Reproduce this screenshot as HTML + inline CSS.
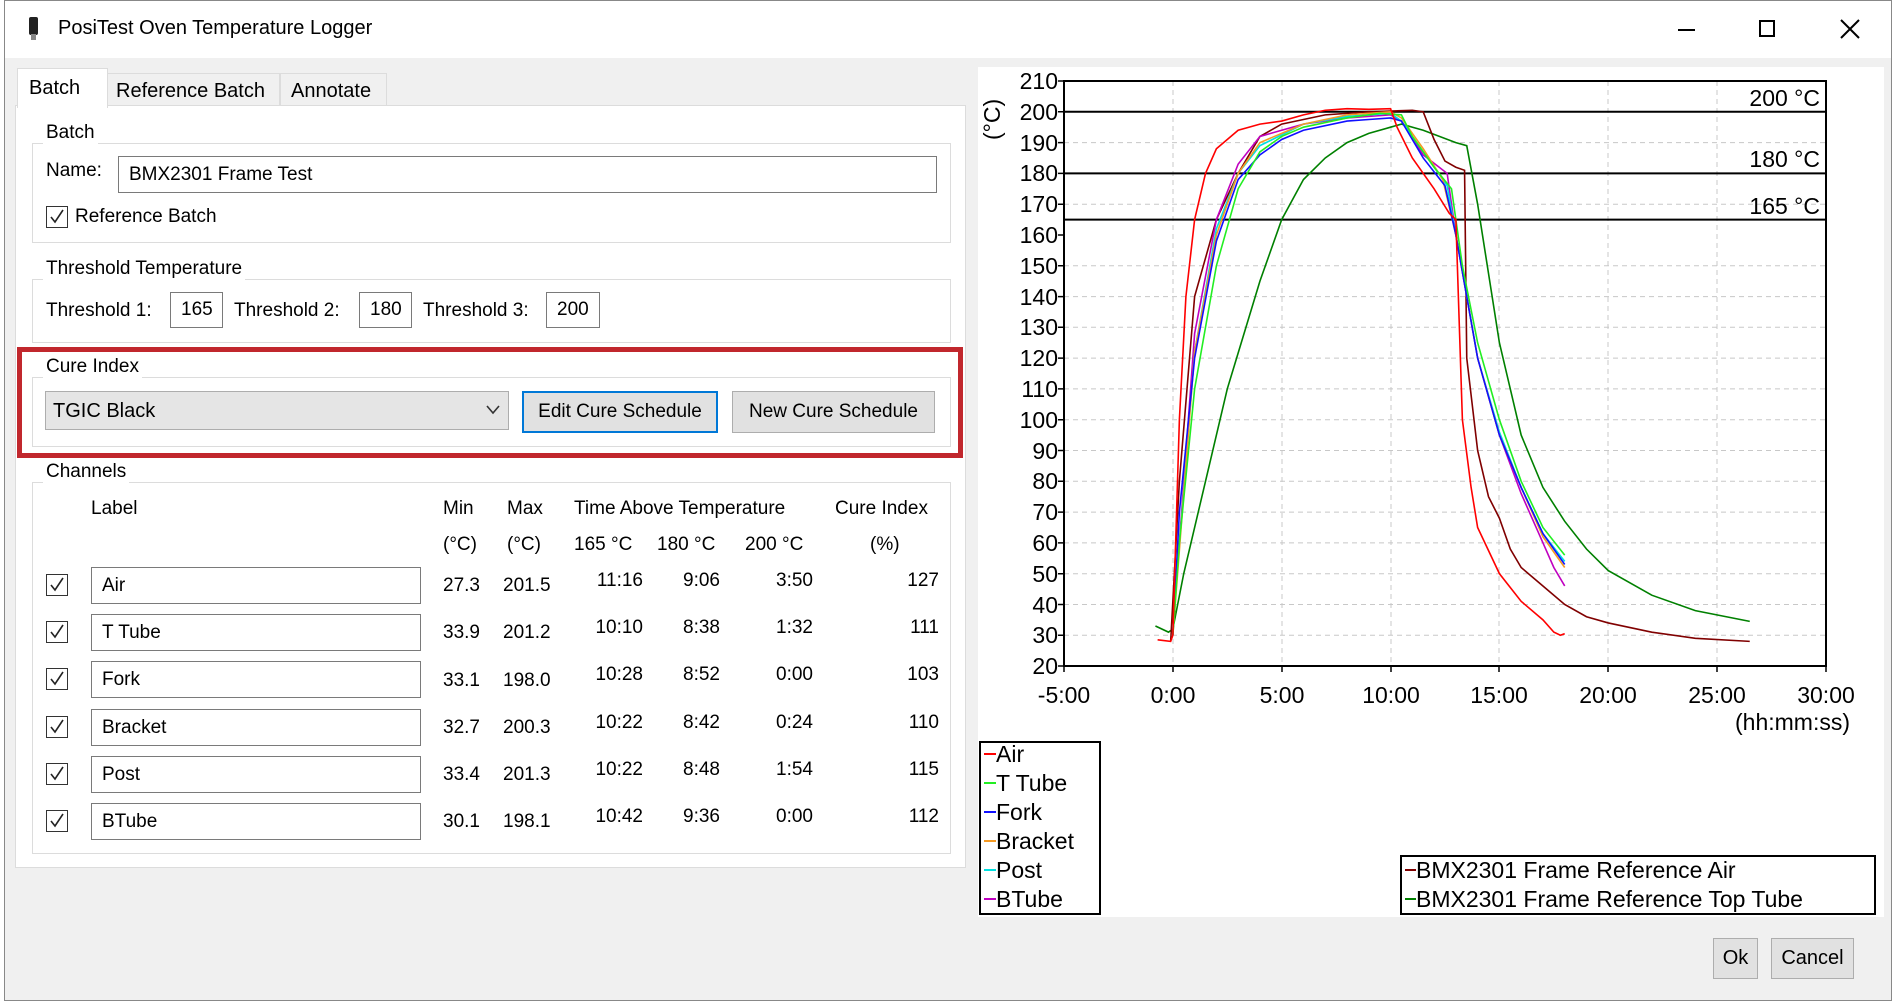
<!DOCTYPE html>
<html><head><meta charset="utf-8"><style>
*{margin:0;padding:0;box-sizing:border-box}
body{width:1900px;height:1004px;background:#fff;font-family:"Liberation Sans",sans-serif;color:#000;position:relative;overflow:hidden}
.a{position:absolute;white-space:nowrap}
.t{font-size:19px}
.gb{position:absolute;border:1px solid #dcdcdc}
.gl{position:absolute;background:#fff;padding:0 3px;font-size:19px}
.inp{position:absolute;background:#fff;border:1px solid #7a7a7a;font-size:19px;padding-left:10px;display:flex;align-items:center}
.cb{position:absolute;width:22px;height:22px;border:1.5px solid #333;background:#fff}
.cb svg{position:absolute;left:2px;top:2px}
.btn{position:absolute;background:#e1e1e1;border:1px solid #adadad;font-size:19px;display:flex;align-items:center;justify-content:center}
.num{position:absolute;font-size:19px;text-align:right}
</style></head><body>
<!-- window frame -->
<div class="a" style="left:4px;top:0;width:1888px;height:1001px;border:1px solid #888;"></div>
<div class="a" style="left:5px;top:58px;width:1886px;height:942px;background:#f0f0f0"></div>
<!-- title -->
<div class="a" style="left:29px;top:17px;width:9px;height:18px;background:#222;border-radius:2px"></div>
<div class="a" style="left:31px;top:34px;width:5px;height:6px;background:#888"></div>
<div class="a" style="left:58px;top:17px;font-size:20px">PosiTest Oven Temperature Logger</div>
<div class="a" style="left:1678px;top:29px;width:17px;height:2px;background:#000"></div>
<div class="a" style="left:1759px;top:20px;width:16px;height:17px;border:2px solid #000"></div>
<svg class="a" style="left:1840px;top:19px" width="20" height="20"><path d="M1 1L19 19M19 1L1 19" stroke="#000" stroke-width="2"/></svg>
<!-- tabs -->
<div class="a" style="left:15px;top:105px;width:951px;height:763px;background:#fff;border:1px solid #dcdcdc"></div>
<div class="a" style="left:107px;top:73px;width:173px;height:33px;background:#f0f0f0;border:1px solid #dcdcdc;font-size:20px;padding:6px 0 0 8px">Reference Batch</div>
<div class="a" style="left:280px;top:73px;width:107px;height:33px;background:#f0f0f0;border:1px solid #dcdcdc;font-size:20px;padding:6px 0 0 10px">Annotate</div>
<div class="a" style="left:17px;top:68px;width:91px;height:40px;background:#fff;border:1px solid #dcdcdc;border-bottom:none;font-size:20px;padding:8px 0 0 11px">Batch</div>
<!-- Batch group -->
<div class="gb" style="left:32px;top:143px;width:919px;height:100px"></div>
<div class="gl" style="left:43px;top:122px">Batch</div>
<div class="a t" style="left:46px;top:160px">Name:</div>
<div class="inp" style="left:118px;top:156px;width:819px;height:37px">BMX2301 Frame Test</div>
<div class="cb" style="left:46px;top:206px"><svg width="16" height="16"><path d="M2 8L6 13L14 1" stroke="#222" stroke-width="1.6" fill="none"/></svg></div>
<div class="a t" style="left:75px;top:206px">Reference Batch</div>
<!-- Threshold -->
<div class="gb" style="left:32px;top:279px;width:919px;height:64px"></div>
<div class="gl" style="left:43px;top:258px">Threshold Temperature</div>
<div class="a t" style="left:46px;top:300px">Threshold 1:</div>
<div class="inp" style="left:170px;top:292px;width:53px;height:36px;padding-left:10px">165</div>
<div class="a t" style="left:234px;top:300px">Threshold 2:</div>
<div class="inp" style="left:359px;top:292px;width:53px;height:36px;padding-left:10px">180</div>
<div class="a t" style="left:423px;top:300px">Threshold 3:</div>
<div class="inp" style="left:546px;top:292px;width:54px;height:36px;padding-left:10px">200</div>
<!-- Cure index -->
<div class="gb" style="left:32px;top:377px;width:919px;height:70px"></div>
<div class="gl" style="left:43px;top:356px">Cure Index</div>
<div class="a" style="left:45px;top:391px;width:464px;height:39px;background:#e5e5e5;border:1px solid #adadad;font-size:20px;padding:8px 0 0 7px">TGIC Black</div>
<svg class="a" style="left:486px;top:405px" width="14" height="10"><path d="M1 1L7 8L13 1" stroke="#333" stroke-width="1.6" fill="none"/></svg>
<div class="btn" style="left:522px;top:391px;width:196px;height:42px;border:2px solid #0078d7">Edit Cure Schedule</div>
<div class="btn" style="left:732px;top:391px;width:203px;height:42px">New Cure Schedule</div>
<div class="a" style="left:17px;top:347px;width:946px;height:111px;border:5px solid #c1272d"></div>
<!-- Channels -->
<div class="gb" style="left:32px;top:482px;width:919px;height:372px"></div>
<div class="gl" style="left:43px;top:461px">Channels</div>
<div class="a t" style="left:91px;top:498px">Label</div>
<div class="a t" style="left:443px;top:498px">Min</div>
<div class="a t" style="left:507px;top:498px">Max</div>
<div class="a t" style="left:574px;top:498px">Time Above Temperature</div>
<div class="a t" style="left:835px;top:498px">Cure Index</div>
<div class="a t" style="left:443px;top:534px">(°C)</div>
<div class="a t" style="left:507px;top:534px">(°C)</div>
<div class="a t" style="left:574px;top:534px">165 °C</div>
<div class="a t" style="left:657px;top:534px">180 °C</div>
<div class="a t" style="left:745px;top:534px">200 °C</div>
<div class="a t" style="left:870px;top:534px">(%)</div>

<div id="rows"></div>
<!-- rows generated inline -->
<div class="cb" style="left:46px;top:574px"><svg width="16" height="16"><path d="M2 8L6 13L14 1" stroke="#222" stroke-width="1.6" fill="none"/></svg></div>
<div class="inp" style="left:91px;top:567px;width:330px;height:37px">Air</div>
<div class="a t" style="left:443px;top:575px">27.3</div><div class="a t" style="left:503px;top:575px">201.5</div>
<div class="num" style="left:560px;width:83px;top:570px">11:16</div><div class="num" style="left:640px;width:80px;top:570px">9:06</div><div class="num" style="left:730px;width:83px;top:570px">3:50</div><div class="num" style="left:860px;width:79px;top:570px">127</div>

<div class="cb" style="left:46px;top:621px"><svg width="16" height="16"><path d="M2 8L6 13L14 1" stroke="#222" stroke-width="1.6" fill="none"/></svg></div>
<div class="inp" style="left:91px;top:614px;width:330px;height:37px">T Tube</div>
<div class="a t" style="left:443px;top:622px">33.9</div><div class="a t" style="left:503px;top:622px">201.2</div>
<div class="num" style="left:560px;width:83px;top:617px">10:10</div><div class="num" style="left:640px;width:80px;top:617px">8:38</div><div class="num" style="left:730px;width:83px;top:617px">1:32</div><div class="num" style="left:860px;width:79px;top:617px">111</div>

<div class="cb" style="left:46px;top:668px"><svg width="16" height="16"><path d="M2 8L6 13L14 1" stroke="#222" stroke-width="1.6" fill="none"/></svg></div>
<div class="inp" style="left:91px;top:661px;width:330px;height:37px">Fork</div>
<div class="a t" style="left:443px;top:670px">33.1</div><div class="a t" style="left:503px;top:670px">198.0</div>
<div class="num" style="left:560px;width:83px;top:664px">10:28</div><div class="num" style="left:640px;width:80px;top:664px">8:52</div><div class="num" style="left:730px;width:83px;top:664px">0:00</div><div class="num" style="left:860px;width:79px;top:664px">103</div>

<div class="cb" style="left:46px;top:716px"><svg width="16" height="16"><path d="M2 8L6 13L14 1" stroke="#222" stroke-width="1.6" fill="none"/></svg></div>
<div class="inp" style="left:91px;top:709px;width:330px;height:37px">Bracket</div>
<div class="a t" style="left:443px;top:717px">32.7</div><div class="a t" style="left:503px;top:717px">200.3</div>
<div class="num" style="left:560px;width:83px;top:712px">10:22</div><div class="num" style="left:640px;width:80px;top:712px">8:42</div><div class="num" style="left:730px;width:83px;top:712px">0:24</div><div class="num" style="left:860px;width:79px;top:712px">110</div>

<div class="cb" style="left:46px;top:763px"><svg width="16" height="16"><path d="M2 8L6 13L14 1" stroke="#222" stroke-width="1.6" fill="none"/></svg></div>
<div class="inp" style="left:91px;top:756px;width:330px;height:37px">Post</div>
<div class="a t" style="left:443px;top:764px">33.4</div><div class="a t" style="left:503px;top:764px">201.3</div>
<div class="num" style="left:560px;width:83px;top:759px">10:22</div><div class="num" style="left:640px;width:80px;top:759px">8:48</div><div class="num" style="left:730px;width:83px;top:759px">1:54</div><div class="num" style="left:860px;width:79px;top:759px">115</div>

<div class="cb" style="left:46px;top:810px"><svg width="16" height="16"><path d="M2 8L6 13L14 1" stroke="#222" stroke-width="1.6" fill="none"/></svg></div>
<div class="inp" style="left:91px;top:803px;width:330px;height:37px">BTube</div>
<div class="a t" style="left:443px;top:811px">30.1</div><div class="a t" style="left:503px;top:811px">198.1</div>
<div class="num" style="left:560px;width:83px;top:806px">10:42</div><div class="num" style="left:640px;width:80px;top:806px">9:36</div><div class="num" style="left:730px;width:83px;top:806px">0:00</div><div class="num" style="left:860px;width:79px;top:806px">112</div>

<!-- Chart -->
<svg class="a" style="left:0;top:0" width="1900" height="1004" font-family="Liberation Sans, sans-serif">
<rect x="978" y="67" width="906" height="850" fill="#fff"/>
<g stroke="#c8c8c8" stroke-width="1" stroke-dasharray="5,4">
<path d="M1173 81V666M1282 81V666M1391 81V666M1499 81V666M1608 81V666M1717 81V666"/>
<path d="M1064 142.6H1826M1064 204.2H1826M1064 265.8H1826M1064 296.6H1826M1064 327.3H1826M1064 358.1H1826M1064 388.9H1826M1064 419.7H1826M1064 450.5H1826M1064 481.3H1826M1064 512.1H1826M1064 542.9H1826M1064 573.7H1826M1064 604.5H1826M1064 635.3H1826"/>
</g>
<g stroke="#000" stroke-width="2" fill="none">
<rect x="1064" y="81" width="762" height="585"/>
<path d="M1064 111.8H1826M1064 173.4H1826M1064 219.6H1826"/>
</g>
<g stroke="#000" stroke-width="1.5">
<path d="M1058 81H1064M1058 111.8H1064M1058 142.6H1064M1058 173.4H1064M1058 204.2H1064M1058 235H1064M1058 265.8H1064M1058 296.6H1064M1058 327.3H1064M1058 358.1H1064M1058 388.9H1064M1058 419.7H1064M1058 450.5H1064M1058 481.3H1064M1058 512.1H1064M1058 542.9H1064M1058 573.7H1064M1058 604.5H1064M1058 635.3H1064M1058 666H1064"/>
<path d="M1064 666V672M1173 666V672M1282 666V672M1391 666V672M1499 666V672M1608 666V672M1717 666V672M1826 666V672"/>
</g>
<g font-size="23" text-anchor="end">
<text x="1058" y="89">210</text><text x="1058" y="120">200</text><text x="1058" y="151">190</text><text x="1058" y="181">180</text><text x="1058" y="212">170</text><text x="1058" y="243">160</text><text x="1058" y="274">150</text><text x="1058" y="305">140</text><text x="1058" y="335">130</text><text x="1058" y="366">120</text><text x="1058" y="397">110</text><text x="1058" y="428">100</text><text x="1058" y="459">90</text><text x="1058" y="489">80</text><text x="1058" y="520">70</text><text x="1058" y="551">60</text><text x="1058" y="582">50</text><text x="1058" y="613">40</text><text x="1058" y="643">30</text><text x="1058" y="674">20</text>
</g>
<text font-size="23" transform="translate(1000,140) rotate(-90)">(°C)</text>
<g font-size="23" text-anchor="middle">
<text x="1064" y="703">-5:00</text><text x="1173" y="703">0:00</text><text x="1282" y="703">5:00</text><text x="1391" y="703">10:00</text><text x="1499" y="703">15:00</text><text x="1608" y="703">20:00</text><text x="1717" y="703">25:00</text><text x="1826" y="703">30:00</text>
</g>
<text x="1850" y="730" font-size="23" text-anchor="end">(hh:mm:ss)</text>
<g font-size="23" text-anchor="end">
<text x="1820" y="106">200 °C</text><text x="1820" y="167">180 °C</text><text x="1820" y="214">165 °C</text>
</g>
<g transform="translate(1172.85,727.6) scale(21.77,-3.079)" fill="none" stroke-width="1.6">
<polyline vector-effect="non-scaling-stroke" stroke="#008000" points="-0.8,33 -0.2,31 0,32 0.5,50 1.5,80 2.5,110 4,145 5,165 6,178 7,185 8,190 9,193 10,195 10.5,196 11.5,194 13,190 13.5,189 14,170 15,125 16,95 17,78 18,67 19,58 20,51 22,43 24,38 26.5,34.5"/>
<polyline vector-effect="non-scaling-stroke" stroke="#800000" points="-0.1,28 0.3,80 1,140 2,165 3,180 4,192 5,196 7,199 9,200 11,200.5 11.5,200 12,191 12.5,184 13,182 13.4,181 13.5,120 14,90 14.5,75 15,68 15.5,58 16,52 17,46 18,40 19,36 20,34 22,31 24,29 26.5,28"/>
<polyline vector-effect="non-scaling-stroke" stroke="#c000c0" points="0,31 1,128 2,165 3,183 4,192 5,194 6,196 8,198 10,199 10.5,197 11.5,186 12.6,180 13,160 14,120 15,95 16,76 17,60 17.5,52 18,46"/>
<polyline vector-effect="non-scaling-stroke" stroke="#00e0e0" points="0,32 1,122 2,162 3,180 4,189 6,196 8,198.5 10,199.5 10.5,197 11.5,187 12.6,176 13,160 14,120 15,96 16,78 17,63 18,54"/>
<polyline vector-effect="non-scaling-stroke" stroke="#f59a23" points="0,30 1,122 2,160 3,180 4,190 6,196 8,199 10,200 10.5,198 11.5,188 12.4,178 13,160 14,120 15,95 16,78 17,62 18,52"/>
<polyline vector-effect="non-scaling-stroke" stroke="#1010ff" points="0,30 0.3,70 1,120 2,158 3,178 4,186 5,191 6,194 8,197 9,197.5 10,198 10.5,197 11.5,185 12.5,176 13,160 14,120 15,95 16,78 17,63 18,53"/>
<polyline vector-effect="non-scaling-stroke" stroke="#22ee22" points="0,30 0.3,60 1,110 2,150 3,175 4,187 5,192 6,195 8,198 9.5,199.5 10.5,199 11,192 12,182 12.8,175 13.3,150 14,125 15,100 16,80 17,65 18,56"/>
<polyline vector-effect="non-scaling-stroke" stroke="#ff0000" points="-0.7,28.5 -0.1,28 0,30 0.3,100 0.6,140 1,165 1.5,180 2,188 3,194 4,196 5,197 6,199 7,200.5 8,201 9,200.8 10,201 10.3,195 11,185 12,175 12.7,167 13,165 13.3,100 13.7,78 14,65 15,50 16,41 17,35 17.5,31 17.8,30 18,30.5"/>
</g>
<!-- legends -->
<rect x="980" y="742" width="120" height="172" fill="#fff" stroke="#000" stroke-width="2"/>
<g font-size="23">
<path d="M984 754H996" stroke="#ff0000" stroke-width="2"/><text x="996" y="762">Air</text>
<path d="M984 783H996" stroke="#22ee22" stroke-width="2"/><text x="996" y="791">T Tube</text>
<path d="M984 812H996" stroke="#1010ff" stroke-width="2"/><text x="996" y="820">Fork</text>
<path d="M984 841H996" stroke="#f59a23" stroke-width="2"/><text x="996" y="849">Bracket</text>
<path d="M984 870H996" stroke="#00e0e0" stroke-width="2"/><text x="996" y="878">Post</text>
<path d="M984 899H996" stroke="#c000c0" stroke-width="2"/><text x="996" y="907">BTube</text>
</g>
<rect x="1401" y="856" width="474" height="58" fill="#fff" stroke="#000" stroke-width="2"/>
<g font-size="23">
<path d="M1405 870H1416" stroke="#800000" stroke-width="2"/><text x="1416" y="878">BMX2301 Frame Reference Air</text>
<path d="M1405 899H1416" stroke="#008000" stroke-width="2"/><text x="1416" y="907">BMX2301 Frame Reference Top Tube</text>
</g>
</svg>
<div class="btn" style="left:1713px;top:938px;width:45px;height:41px;font-size:20px">Ok</div>
<div class="btn" style="left:1771px;top:938px;width:83px;height:41px;font-size:20px">Cancel</div>
</body></html>
